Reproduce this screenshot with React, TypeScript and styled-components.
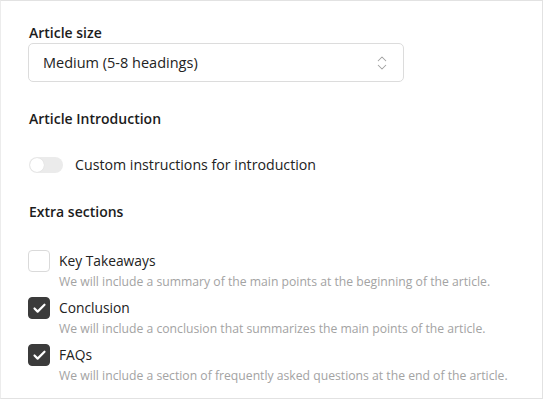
import React, { useState } from 'react';
import styled, { createGlobalStyle } from 'styled-components';
import { ChevronsUpDown, Check } from 'lucide-react';

const GlobalStyle = createGlobalStyle`
  html, body {
    margin: 0;
    padding: 0;
    background: #ffffff;
  }
  body {
    font-family: "Open Sans", "Noto Sans", Arial, sans-serif;
    color: #1f1f1f;
  }
`;

const extras = [
  {
    id: 'takeaways',
    label: 'Key Takeaways',
    hint: 'We will include a summary of the main points at the beginning of the article.',
    checked: false,
  },
  {
    id: 'conclusion',
    label: 'Conclusion',
    hint: 'We will include a conclusion that summarizes the main points of the article.',
    checked: true,
  },
  {
    id: 'faqs',
    label: 'FAQs',
    hint: 'We will include a section of frequently asked questions at the end of the article.',
    checked: true,
  },
];

const App: React.FC = () => {
  const [intro, setIntro] = useState(false);
  const [checked, setChecked] = useState<Record<string, boolean>>(
    Object.fromEntries(extras.map(e => [e.id, e.checked])),
  );

  return (
    <>
      <GlobalStyle />
      <Panel>
        <Section>
          <Heading>Article size</Heading>
          <Select>
            <span>Medium (5-8 headings)</span>
            <ChevronsUpDown size={18} strokeWidth={1.4} color="#a0a0a0" />
          </Select>
        </Section>

        <Section $gap={27}>
          <Heading>Article Introduction</Heading>
          <ToggleRow onClick={() => setIntro(!intro)}>
            <Toggle $on={intro}>
              <Knob $on={intro} />
            </Toggle>
            <ToggleLabel>Custom instructions for introduction</ToggleLabel>
          </ToggleRow>
        </Section>

        <Section $gap={28}>
          <Heading>Extra sections</Heading>
          <OptionList>
            {extras.map(item => (
              <Option key={item.id}>
                <Box
                  $checked={checked[item.id]}
                  onClick={() =>
                    setChecked({ ...checked, [item.id]: !checked[item.id] })
                  }
                >
                  {checked[item.id] ? (
                    <Check size={15} strokeWidth={3.5} color="#ffffff" />
                  ) : null}
                </Box>
                <OptionText>
                  <OptionLabel>{item.label}</OptionLabel>
                  <Hint>{item.hint}</Hint>
                </OptionText>
              </Option>
            ))}
          </OptionList>
        </Section>
      </Panel>
    </>
  );
};

export default App;

const Panel = styled.div`
  box-sizing: border-box;
  width: 543px;
  height: 399px;
  border: 1px solid #e2e2e2;
  border-left-color: #ececec;
  background: #ffffff;
  padding: 22px 26px 0 27px;
  display: flex;
  flex-direction: column;
`;

const Section = styled.div<{ $gap?: number }>`
  display: flex;
  flex-direction: column;
  margin-top: ${p => p.$gap ?? 0}px;
`;

const Heading = styled.div`
  font-size: 14px;
  font-weight: 600;
  line-height: 20px;
  color: #1c1c1c;
  padding-left: 1px;
`;

const Select = styled.div`
  box-sizing: border-box;
  width: 376px;
  height: 39px;
  border: 1px solid #dcdcdc;
  border-radius: 5px;
  padding: 0 12px 0 14px;
  display: flex;
  align-items: center;
  justify-content: space-between;
  font-size: 14.5px;
  color: #222;
`;

const ToggleRow = styled.div`
  display: flex;
  align-items: center;
  gap: 12px;
  margin-top: 26px;
  cursor: pointer;
`;

const Toggle = styled.div<{ $on: boolean }>`
  box-sizing: border-box;
  width: 34px;
  height: 16px;
  border-radius: 8px;
  background: ${p => (p.$on ? '#3d3d3d' : '#ebebeb')};
  padding: 1px;
  display: flex;
  justify-content: ${p => (p.$on ? 'flex-end' : 'flex-start')};
  margin-left: 1px;
`;

const Knob = styled.div<{ $on: boolean }>`
  width: 14px;
  height: 14px;
  border-radius: 50%;
  background: #ffffff;
  box-shadow: 0 0 1px rgba(0, 0, 0, 0.15);
`;

const ToggleLabel = styled.span`
  font-size: 14.2px;
  color: #222;
`;

const OptionList = styled.div`
  display: flex;
  flex-direction: column;
  gap: 5px;
  margin-top: 28px;
`;

const Option = styled.div`
  display: flex;
  gap: 9px;
  align-items: flex-start;
`;

const Box = styled.div<{ $checked: boolean }>`
  box-sizing: border-box;
  width: 22px;
  height: 22px;
  flex-shrink: 0;
  border-radius: 4px;
  border: 1px solid ${p => (p.$checked ? '#3b3b3b' : '#dadada')};
  background: ${p => (p.$checked ? '#3b3b3b' : '#ffffff')};
  display: flex;
  align-items: center;
  justify-content: center;
  cursor: pointer;
`;

const OptionText = styled.div`
  display: flex;
  flex-direction: column;
`;

const OptionLabel = styled.div`
  font-size: 13.8px;
  line-height: 22px;
  color: #222;
`;

const Hint = styled.div`
  font-size: 12.2px;
  line-height: 20px;
  color: #a3a3a3;
`;
